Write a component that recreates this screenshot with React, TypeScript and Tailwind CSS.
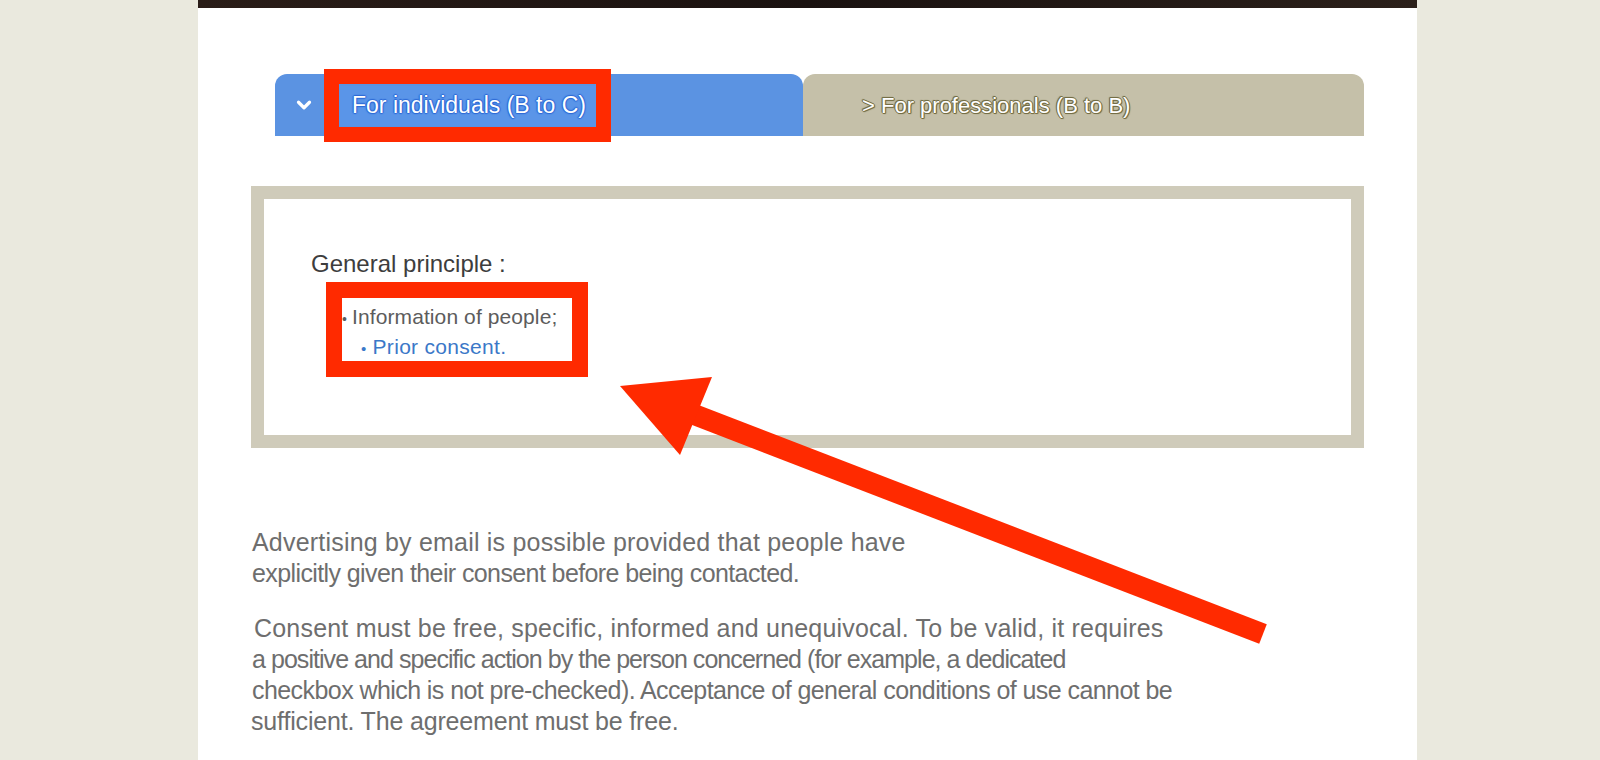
import React from 'react';
import { ChevronDown } from 'lucide-react';

const font = { fontFamily: '"Liberation Sans", Arial, sans-serif' };

const blueOutline =
  '1px 0 1px #2d6ad6, -1px 0 1px #2d6ad6, 0 1px 1px #2d6ad6, 0 -1px 1px #2d6ad6, 0 0 2px #2d6ad6';
const oliveOutline =
  '1px 0 0 #756e45, -1px 0 0 #756e45, 0 1px 0 #756e45, 0 -1px 0 #756e45, 1px 1px 1px #756e45, -1px -1px 1px #756e45';

function Tabs() {
  return (
    <div className="flex ml-[77px] h-[62px]">
      <div className="relative w-[528px] bg-[#5b93e2] rounded-tl-[12px] rounded-tr-[12px] flex items-center">
        <ChevronDown className="w-[22px] h-[22px] text-white ml-[18px]" strokeWidth={3.5} />
        <span className="relative ml-[25px] mt-[1px] h-[40px] px-[12px] flex items-center bg-[#5a95e8]">
          <span className="text-white text-[23px]" style={{ textShadow: blueOutline }}>
            For individuals (B to C)
          </span>
          <span className="absolute -left-[16px] -right-[13px] -top-[17px] -bottom-[16px] border-[15px] border-[#ff2a00]" />
        </span>
      </div>
      <div className="w-[561px] bg-[#c5c0a9] rounded-tl-[12px] rounded-tr-[12px] flex items-center">
        <span className="ml-[59px] text-white text-[22px]" style={{ textShadow: oliveOutline }}>
          &gt; For professionals (B to B)
        </span>
      </div>
    </div>
  );
}

function PrincipleBox() {
  return (
    <div className="ml-[53px] mt-[50px] w-[1113px] h-[262px] border-[13px] border-[#cfcbba] bg-white">
      <div className="pl-[47px] pt-[51px]">
        <p className="text-[24px] leading-[28px] text-[#3d3d3d]">General principle :</p>
        <div className="mt-[4px] ml-[15px] w-[262px] h-[95px] border-[16px] border-[#ff2a00] pt-[5px] text-[21px] leading-[28px]">
          <p className="text-[#5c5c5c] whitespace-nowrap tracking-[0.1px]">
            <span className="text-[14px] mr-[5px]">•</span>Information of people;
          </p>
          <p className="text-[#3b78c8] pl-[19px] whitespace-nowrap tracking-[0.3px]">
            <span className="text-[15px] mr-[6px]">•</span>Prior consent.
          </p>
        </div>
      </div>
    </div>
  );
}

function Paragraphs() {
  return (
    <div className="ml-[54px] mt-[79px] text-[25px] leading-[31px] text-[#6e6e6e]">
      <p>
        <span className="block tracking-[0.2px]">Advertising by email is possible provided that people have</span>
        <span className="block tracking-[-0.6px]">explicitly given their consent before being contacted.</span>
      </p>
      <p className="mt-[24px]">
        <span className="block pl-[2px] tracking-[0.2px]">
          Consent must be free, specific, informed and unequivocal. To be valid, it requires
        </span>
        <span className="block tracking-[-0.95px]">
          a positive and specific action by the person concerned (for example, a dedicated
        </span>
        <span className="block tracking-[-0.57px]">
          checkbox which is not pre-checked). Acceptance of general conditions of use cannot be
        </span>
        <span className="block -ml-[1px] tracking-[-0.17px]">sufficient. The agreement must be free.</span>
      </p>
    </div>
  );
}

function Arrow() {
  return (
    <svg className="absolute left-0 top-0 pointer-events-none" width="1600" height="760" viewBox="0 0 1600 760">
      <line x1="672" y1="406" x2="1263" y2="634" stroke="#ff2a00" strokeWidth="21" />
      <polygon points="620,386 712,377 680,455" fill="#ff2a00" />
    </svg>
  );
}

export default function App() {
  return (
    <div className="relative w-[1600px] h-[760px] bg-[#eae9de] overflow-hidden" style={font}>
      <div className="ml-[198px] w-[1219px] h-full bg-white">
        <div className="h-[8px] bg-gradient-to-r from-[#2a1d18] via-[#1a1210] to-[#2b201a]" />
        <div className="pt-[66px]">
          <Tabs />
          <PrincipleBox />
          <Paragraphs />
        </div>
      </div>
      <Arrow />
    </div>
  );
}
